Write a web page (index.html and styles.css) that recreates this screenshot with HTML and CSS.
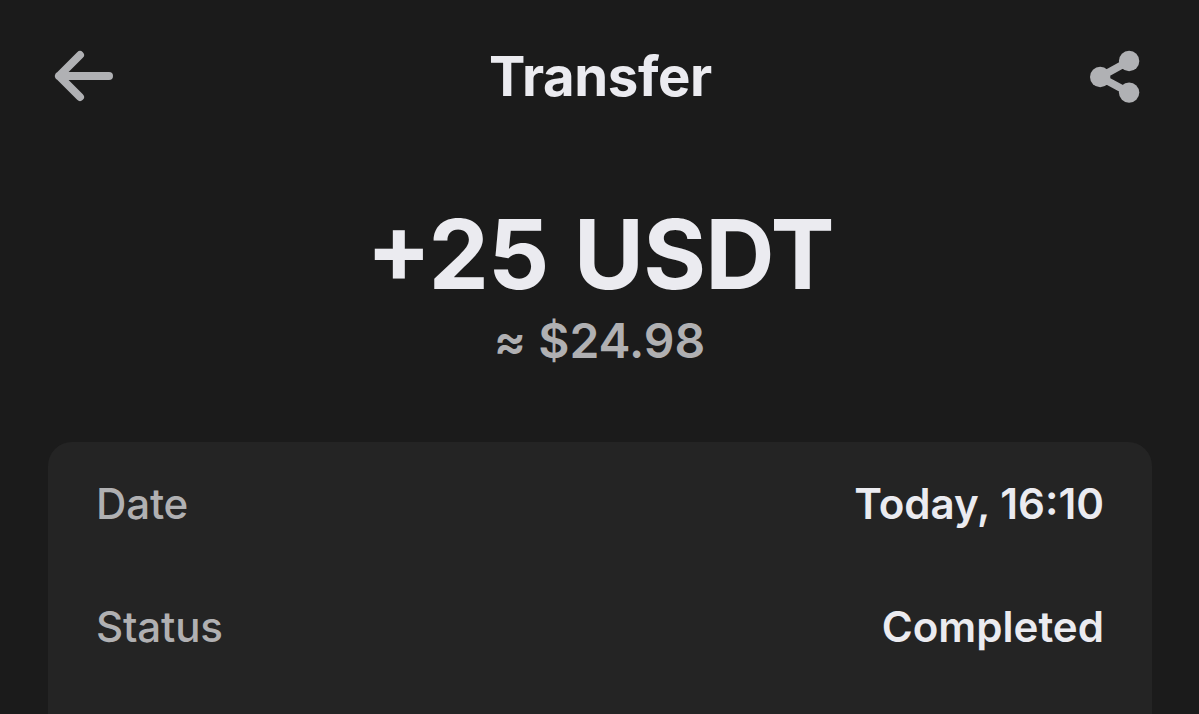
FILE: index.html
```html
<!DOCTYPE html>
<html lang="en">

<head>
    <meta charset="UTF-8">
    <meta name="viewport" content="width=device-width, initial-scale=1.0">
    <link rel="stylesheet" href="styles.css">
    <title>Transfer</title>
</head>

<body>
    <header class="header">
        <button class="headerButton" aria-label="Back">
            <svg class="iconBack" width="60" height="52" viewBox="0 0 60 52">
                <path d="M26 5L5 26L26 47M5 26H55" />
                <path class="iconBackTip" d="M5 26L13 18V34Z" />
            </svg>
        </button>
        <h1>Transfer</h1>
        <button class="headerButton" aria-label="Share">
            <svg class="iconShare" width="50" height="53" viewBox="0 0 50 53">
                <path d="M39.1 11L10.2 27L39.1 42.6" />
                <circle cx="39.1" cy="11" r="10.2" />
                <circle cx="10.2" cy="27" r="10.2" />
                <circle cx="39.1" cy="42.6" r="10.2" />
            </svg>
        </button>
    </header>
    <main>
        <section class="amount">
            <h2>+25 USDT</h2>
            <p>≈ $24.98</p>
        </section>
        <section class="details">
            <div class="detailsRow">
                <span class="detailsLabel">Date</span>
                <span class="detailsValue">Today, 16:10</span>
            </div>
            <div class="detailsRow">
                <span class="detailsLabel">Status</span>
                <span class="detailsValue">Completed</span>
            </div>
        </section>
    </main>
</body>

</html>
```
FILE: styles.css
```css
body,
h1,
h2,
p {
    margin: 0;
    padding: 0;
}

body {
    background-color: #1b1b1b;
    color: #ebebf0;
    font-family: 'Inter', sans-serif;
}

.header {
    display: flex;
    justify-content: space-between;
    align-items: center;
    height: 152px;
    padding: 0 59px 0 54px;
}

.header h1 {
    padding-right: 3px;
    font-size: 54.5px;
    font-weight: 700;
    line-height: 68px;
    letter-spacing: -0.4px;
}

.headerButton {
    display: flex;
    padding: 0;
    border: none;
    background: none;
    cursor: pointer;
}

.iconBack path {
    fill: none;
    stroke: #b0b1b4;
    stroke-width: 8;
    stroke-linecap: round;
    stroke-linejoin: round;
}

.iconBack .iconBackTip {
    fill: #b0b1b4;
    stroke: none;
}

.iconShare path {
    fill: none;
    stroke: #b0b1b4;
    stroke-width: 7.5;
}

.iconShare circle {
    fill: #b0b1b4;
}

/* Valor */
.amount {
    height: 290px;
    box-sizing: border-box;
    padding-top: 44px;
    text-align: center;
}

.amount h2 {
    padding-left: 1px;
    font-size: 96px;
    font-weight: 700;
    line-height: 116px;
    letter-spacing: -0.9px;
    word-spacing: 3.5px;
    font-feature-settings: "calt" 1;
}

.amount p {
    color: #b0b0b2;
    font-size: 48px;
    font-weight: 600;
    line-height: 57px;
    font-feature-settings: "calt" 0;
}

.details {
    height: 272px;
    margin: 0 47px 0 48px;
    border-radius: 24px 24px 0 0;
    background-color: #242424;
}

.detailsRow {
    display: flex;
    justify-content: space-between;
    align-items: center;
    height: 123px;
    padding: 0 48px;
    font-size: 42.1px;
}

.detailsLabel {
    color: #b0b0b2;
    font-weight: 500;
    letter-spacing: -0.2px;
}

.detailsValue {
    font-weight: 600;
}
```
